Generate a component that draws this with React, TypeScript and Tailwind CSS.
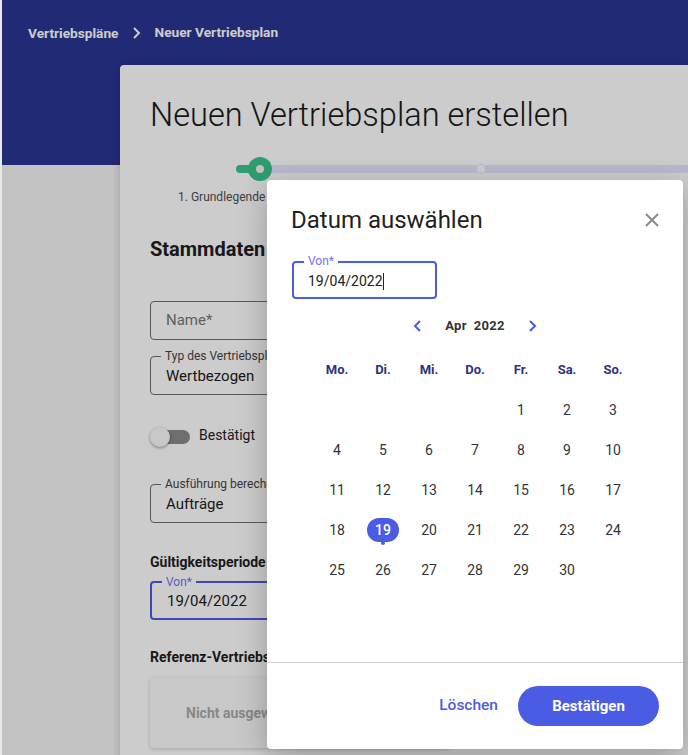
import React from "react";

const WEEKDAYS = ["Mo.", "Di.", "Mi.", "Do.", "Fr.", "Sa.", "So."];
// April 2022 starts on a Friday
const DAYS: (number | null)[] = [null, null, null, null, ...Array.from({ length: 30 }, (_, i) => i + 1)];

function OutlinedField({ label, value, focused }: { label?: string; value: string; focused?: boolean }) {
  return (
    <div
      className={
        "relative w-[400px] h-[39px] rounded-[4px] flex items-center pl-[15px] " +
        (focused ? "border-2 border-[#4b5ce4]" : "border border-[#6e6e6e]")
      }
    >
      {label && (
        <span
          className={
            "absolute -top-[8px] left-[10px] bg-white px-[4px] text-[12px] leading-[14px] " +
            (focused ? "text-[#7a6ff2]" : "text-[#444]")
          }
        >
          {label}
        </span>
      )}
      <span className={"text-[15px] " + (label ? "mt-[2px] text-[#202020]" : "text-[#777]")}>{value}</span>
    </div>
  );
}

function DatePickerDialog() {
  return (
    <div className="absolute left-[265px] top-[180px] w-[416px] h-[569px] bg-white rounded-[4px] shadow-[0_8px_30px_rgba(0,0,0,0.25)] flex flex-col">
      <div className="flex items-center justify-between pl-[24px] pr-[24px] pt-[24px]">
        <h2 className="text-[24px] leading-[32px] text-[#1f1f1f]">Datum auswählen</h2>
        <svg width="16" height="16" viewBox="0 0 16 16" className="mr-[-1px]">
          <path d="M2 2L14 14M14 2L2 14" stroke="#8a8a8a" strokeWidth="2" />
        </svg>
      </div>

      <div className="ml-[25px] mt-[25px] relative w-[145px] h-[38px] rounded-[4px] border-2 border-[#4b5ce4] flex items-center pl-[14px]">
        <span className="absolute -top-[9px] left-[10px] bg-white px-[4px] text-[12px] leading-[14px] text-[#7a6ff2]">
          Von*
        </span>
        <span className="text-[14px] text-[#222] mt-[2px]">19/04/2022</span>
        <span className="w-[1px] h-[17px] bg-[#222] mt-[2px]" />
      </div>

      <div className="mt-[17px] h-[20px] flex items-center justify-center">
        <svg width="12" height="14" viewBox="0 0 12 14">
          <path d="M8 2L3 7L8 12" fill="none" stroke="#4b5ce4" strokeWidth="2" />
        </svg>
        <span className="mx-[21px] text-[13px] font-bold text-[#333] tracking-[0.3px]">Apr&nbsp;&nbsp;2022</span>
        <svg width="12" height="14" viewBox="0 0 12 14">
          <path d="M4 2L9 7L4 12" fill="none" stroke="#4b5ce4" strokeWidth="2" />
        </svg>
      </div>

      <div className="mt-[14px] mx-auto w-[322px] grid grid-cols-7">
        {WEEKDAYS.map((d) => (
          <div key={d} className="h-[40px] flex items-center justify-center text-[13px] font-bold text-[#2d3282]">
            {d}
          </div>
        ))}
        {DAYS.map((d, i) => (
          <div key={i} className="h-[40px] flex items-center justify-center text-[14px] text-[#333]">
            {d === 19 ? (
              <span className="relative w-[32px] h-[24px] rounded-full bg-[#4b5ce4] text-white font-medium flex items-center justify-center">
                19
                <span className="absolute -bottom-[3px] left-[14px] w-[4px] h-[4px] rounded-full bg-[#4b5ce4]" />
              </span>
            ) : (
              d
            )}
          </div>
        ))}
      </div>

      <div className="mt-auto h-[87px] border-t border-[#cfcfcf] flex items-center justify-end gap-[20px] pr-[24px]">
        <button className="text-[15.5px] font-medium text-[#4b5ce4]">Löschen</button>
        <button className="w-[141px] h-[40px] rounded-full bg-[#4b5ce4] text-white text-[15px] font-bold">
          Bestätigen
        </button>
      </div>
    </div>
  );
}

export default function App() {
  return (
    <div
      className="relative w-[688px] h-[755px] overflow-hidden bg-[#f4f4f4] border-l-2 border-[#e8e8e8]"
      style={{ fontFamily: "Roboto, 'Noto Sans', sans-serif" }}
    >
      <header className="h-[165px] bg-[#2a3593] pl-[26px] pt-[23px] flex items-start gap-[13px] text-[13.7px] leading-[20px] font-bold text-white">
        <span>Vertriebspläne</span>
        <svg width="10" height="20" viewBox="0 0 10 20">
          <path d="M2 5L7 10L2 15" fill="none" stroke="white" strokeWidth="2" />
        </svg>
        <span className="-mt-[1px]">Neuer Vertriebsplan</span>
      </header>

      <main className="-mt-[100px] ml-[118px] h-[720px] bg-white rounded-tl-[4px] shadow-[0_0_8px_rgba(0,0,0,0.2)] pl-[30px] pt-[30px]">
        <h1 className="text-[32.6px] leading-[40px] font-light text-[#1a1a1a]">Neuen Vertriebsplan erstellen</h1>

        <div className="mt-[22px] flex items-center ml-[86px]">
          <div className="w-[14px] h-[8px] rounded-l-full bg-[#3ac68a]" />
          <div className="w-[24px] h-[24px] -ml-[2px] rounded-full bg-[#3ac68a] flex items-center justify-center">
            <div className="w-[8px] h-[8px] rounded-full bg-[#f4f4f4]" />
          </div>
          <div className="w-[205px] h-[8px] bg-[#e6e6ff]" />
          <div className="w-[10px] h-[10px] rounded-full bg-white border border-[#e6e6ff] -mx-[1px]" />
          <div className="flex-1 h-[8px] bg-[#e6e6ff]" />
        </div>
        <div className="mt-[8px] ml-[28px] text-[12px] leading-[16px] text-[#505050] whitespace-nowrap">
          1. Grundlegende Informationen
        </div>

        <h3 className="mt-[30px] text-[20px] leading-[28px] font-bold text-[#1e1e1e]">Stammdaten</h3>

        <div className="mt-[38px]">
          <OutlinedField value="Name*" />
        </div>
        <div className="mt-[16px]">
          <OutlinedField label="Typ des Vertriebsplans" value="Wertbezogen" />
        </div>

        <div className="mt-[32px] flex items-center gap-[9px]">
          <div className="relative w-[40px] h-[20px] flex items-center">
            <div className="ml-[8px] w-[32px] h-[14px] rounded-full bg-[#8a8a8a]" />
            <div className="absolute left-[0px] w-[20px] h-[20px] rounded-full bg-[#fafafa] shadow-[0_1px_3px_rgba(0,0,0,0.4)]" />
          </div>
          <span className="text-[14px] text-[#222] -mt-[3px]">Bestätigt</span>
        </div>

        <div className="mt-[37px]">
          <OutlinedField label="Ausführung berechnen für" value="Aufträge" />
        </div>

        <h4 className="mt-[30px] text-[14px] leading-[18px] font-bold text-[#1e1e1e]">Gültigkeitsperiode</h4>
        <div className="mt-[10px]">
          <OutlinedField label="Von*" value="19/04/2022" focused />
        </div>

        <h4 className="mt-[28px] text-[14px] leading-[18px] font-bold text-[#1e1e1e]">Referenz-Vertriebsplan</h4>
        <div className="mt-[12px] w-[300px] h-[70px] rounded-[4px] bg-[#fafafa] shadow-[0_1px_4px_rgba(0,0,0,0.2)] flex items-center pl-[36px]">
          <span className="text-[14px] font-bold text-[#aaaaaa]">Nicht ausgewählt</span>
        </div>
      </main>

      <div className="absolute inset-0 bg-black/20" />
      <DatePickerDialog />
    </div>
  );
}
